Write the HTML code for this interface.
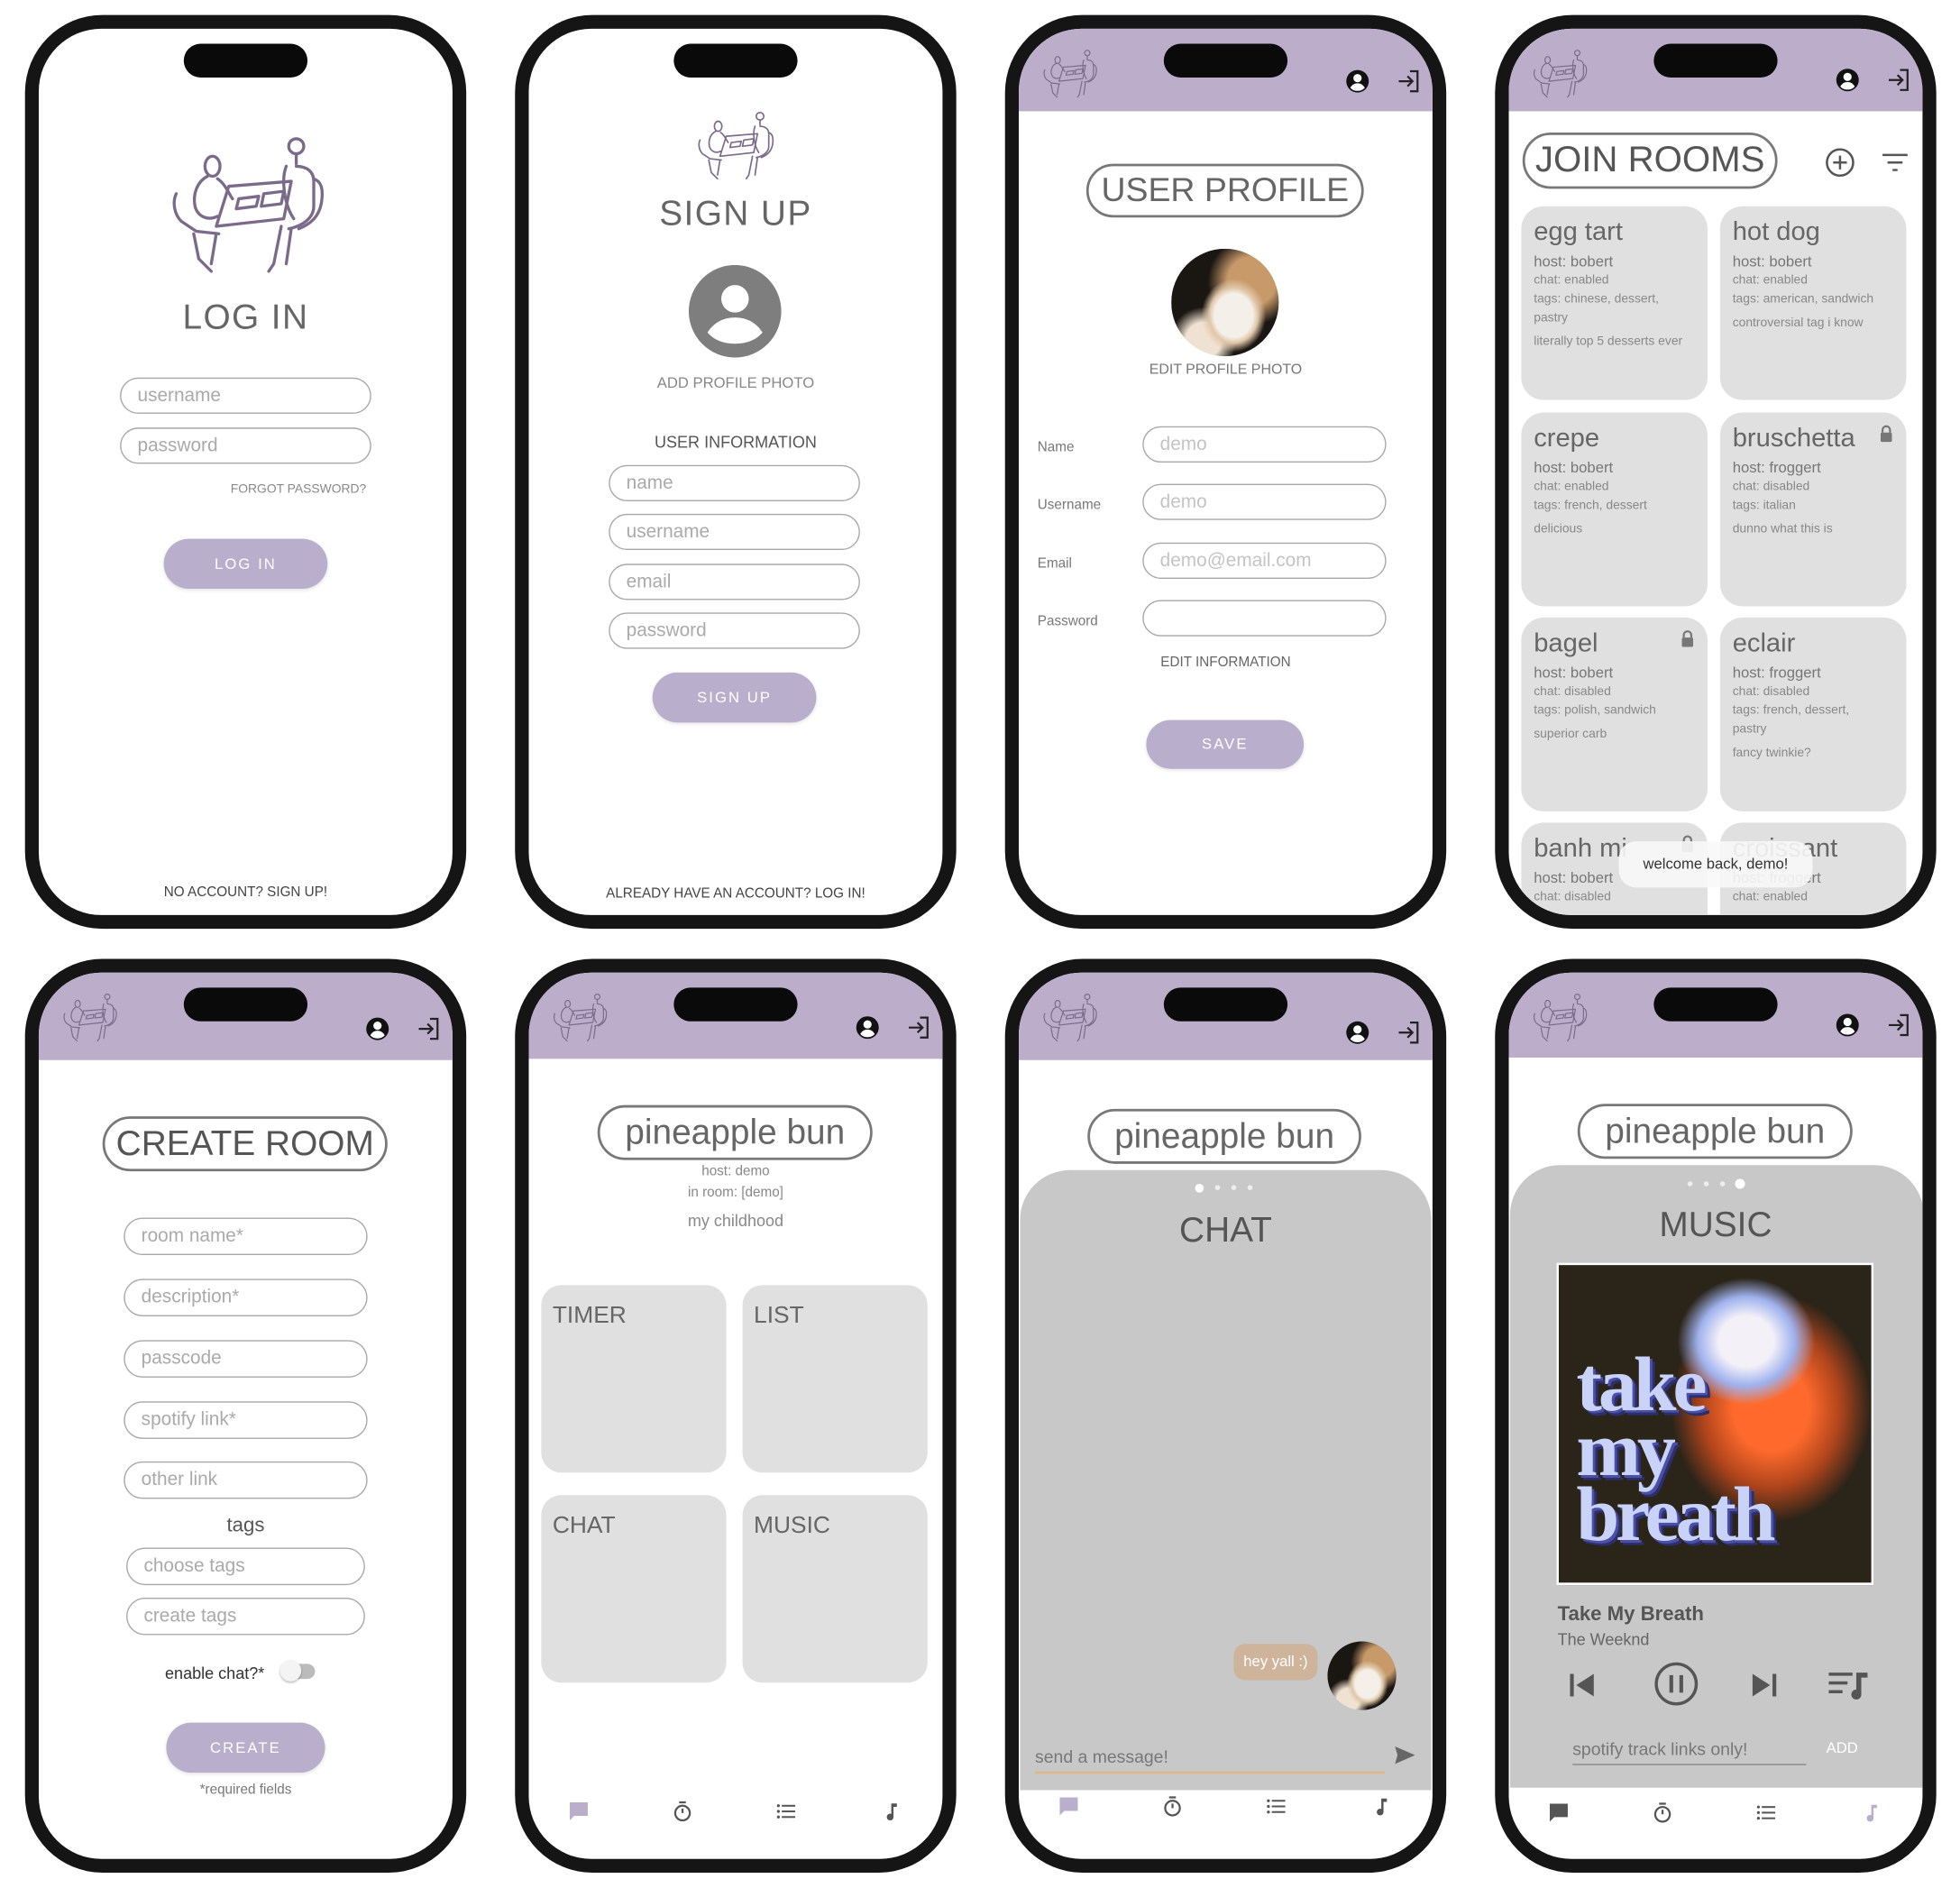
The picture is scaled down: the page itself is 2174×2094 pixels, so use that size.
<!DOCTYPE html>
<html><head><meta charset="utf-8"><style>
*{margin:0;padding:0}
body{width:2174px;height:2092px;background:#fff;overflow:hidden;font-family:"Liberation Sans",sans-serif}
#w{position:absolute;left:0;top:0;width:1568px;height:1510px;transform:scale(1.3865);transform-origin:0 0}
.ph{position:absolute;width:353px;height:731px;background:#151515;border-radius:62px}
.scr{position:absolute;left:11px;top:11px;width:331px;height:709px;border-radius:50px;overflow:hidden;background:#fff}
.c{position:absolute;left:-11px;top:-11px;width:353px;height:731px}
.isl{position:absolute;left:127px;top:23px;width:99px;height:27px;border-radius:14px;background:#0a0a0a}
.a{position:absolute}
.ct{position:absolute;left:0;width:353px;text-align:center}
.hdr{position:absolute;left:0;top:0;width:353px;height:77px;background:#bcaecb}
.pill{position:absolute;border:2px solid #787878;border-radius:999px;text-align:center;color:#666;box-sizing:border-box}
.in{position:absolute;border:1.3px solid #a8a8a8;border-radius:15px;box-sizing:border-box;height:29px;color:#aaa;font-size:15px;padding-left:13px;line-height:27px}
.btn{position:absolute;background:#b9aecb;border-radius:20px;color:#fff;text-align:center;font-size:12px;letter-spacing:1.5px;box-shadow:0 1px 3px rgba(0,0,0,.12)}
.card{position:absolute;width:149px;height:155px;background:#e0e0e0;border-radius:18px;color:#888;font-size:10px;box-sizing:border-box;padding:8px 0 0 10px;line-height:15px}
.card b{display:block;font-weight:normal;font-size:21px;color:#666;line-height:26px;margin-bottom:2px}
.card i{display:block;font-style:normal;font-size:12px;color:#777;line-height:16px}
.card p{margin-top:4px}
.tile{position:absolute;width:148px;height:150px;background:#e0e0e0;border-radius:16px;color:#666;font-size:19px;box-sizing:border-box;padding:14px 0 0 9px}
.lk{position:absolute;right:10px;top:10px}
.cat{position:absolute;border-radius:50%;background:radial-gradient(ellipse 30% 34% at 58% 62%,#f4efe9 0 60%,#e0c7a8 75%,transparent 100%),radial-gradient(circle at 75% 30%,#c89a6a 0 22%,transparent 40%),radial-gradient(circle at 30% 85%,#efe2d2 0 15%,transparent 28%),#1a1612}
</style></head><body><div id="w">
<svg width="0" height="0" style="position:absolute">
<defs>
<symbol id="logo" viewBox="0 0 130 118"><g fill="none" stroke="#7b6a8a" stroke-width="2.4" stroke-linecap="round" stroke-linejoin="round">
<ellipse cx="37" cy="28" rx="6" ry="8"/><path d="M33 36c-8 4-12 14-10 24 2 8 10 12 18 8"/><path d="M41 38c6 4 8 10 12 16"/>
<path d="M8 50c-3 6-2 16 4 22l12 8 18 2"/><path d="M22 82l4 20 10 10M40 82l-4 24"/>
<path d="M50 44l50-4-6 30-54 6z"/><path d="M58 54l16-2-2 8-16 2zM78 50l16-2-2 10-16 2z"/>
<circle cx="104" cy="12" r="6"/><path d="M104 18v8M96 28c-4 10-2 30 6 42M104 28c8 0 14 4 14 12v20c0 10-10 16-20 18"/>
<path d="M118 38c6 2 8 8 6 20-2 10-8 16-18 20"/><path d="M92 76l-6 30-4 6M100 78l-4 28"/>
</g></symbol>
<symbol id="prof" viewBox="0 0 20 20"><circle cx="10" cy="10" r="9" fill="#111"/><circle cx="10" cy="7.5" r="3.3" fill="#fff"/><path d="M4.2 15.2c1.5-2.6 3.4-3.6 5.8-3.6s4.3 1 5.8 3.6c-1.5 1.6-3.5 2.5-5.8 2.5s-4.3-.9-5.8-2.5z" fill="#fff"/></symbol>
<symbol id="out" viewBox="0 0 20 20"><g fill="none" stroke="#222" stroke-width="1.6"><path d="M11 2h6v16h-6"/><path d="M2 10h11M9 6l4 4-4 4"/></g></symbol>
<symbol id="nchat" viewBox="0 0 20 20"><path d="M2 2h16v12H6l-4 4z"/></symbol>
<symbol id="ntimer" viewBox="0 0 20 20"><g fill="none" stroke="#555" stroke-width="1.8"><circle cx="10" cy="11.5" r="6.5"/><path d="M7 2h6M10 11.5V7.5"/></g></symbol>
<symbol id="nlist" viewBox="0 0 20 20"><g fill="#555"><circle cx="3" cy="5" r="1.3"/><circle cx="3" cy="10" r="1.3"/><circle cx="3" cy="15" r="1.3"/><rect x="6" y="4.2" width="12" height="1.6"/><rect x="6" y="9.2" width="12" height="1.6"/><rect x="6" y="14.2" width="12" height="1.6"/></g></symbol>
<symbol id="nnote" viewBox="0 0 20 20"><path d="M10 3h5v3h-3v9a3 3 0 1 1-2-2.8z"/></symbol>
<symbol id="lock" viewBox="0 0 12 14"><path d="M3 6V4a3 3 0 0 1 6 0v2" fill="none" stroke="#777" stroke-width="1.6"/><rect x="1.5" y="6" width="9" height="7.5" rx="1" fill="#777"/></symbol>
</defs></svg>

<!-- PHONE 1 LOGIN -->
<div class="ph" style="left:20px;top:12px"><div class="scr"><div class="c">
<svg class="a" style="left:113px;top:93px" width="130" height="118"><use href="#logo"/></svg>
<div class="ct" style="top:226px;font-size:28px;color:#666;letter-spacing:1px">LOG IN</div>
<div class="in" style="left:76px;top:290px;width:201px">username</div>
<div class="in" style="left:76px;top:330px;width:201px">password</div>
<div class="a" style="left:120px;width:153px;top:374px;text-align:right;font-size:10px;color:#888">FORGOT PASSWORD?</div>
<div class="btn" style="left:111px;top:419px;width:131px;height:40px;line-height:40px">LOG IN</div>
<div class="ct" style="top:696px;font-size:11px;color:#444">NO ACCOUNT? SIGN UP!</div>
</div></div><div class="isl"></div></div>

<!-- PHONE 2 SIGNUP -->
<div class="ph" style="left:412px;top:12px"><div class="scr"><div class="c">
<svg class="a" style="left:144px;top:75px" width="65" height="59"><use href="#logo"/></svg>
<div class="ct" style="top:143px;font-size:28px;color:#666;letter-spacing:1px">SIGN UP</div>
<svg class="a" style="left:139px;top:200px" width="74" height="74" viewBox="0 0 74 74"><circle cx="37" cy="37" r="37" fill="#7e7e7e"/><circle cx="37" cy="27" r="11" fill="#fff"/><path d="M15 54c5-8 13-12 22-12s17 4 22 12c-5 6-13 9-22 9s-17-3-22-9z" fill="#fff"/></svg>
<div class="ct" style="top:287px;font-size:12px;color:#888">ADD PROFILE PHOTO</div>
<div class="ct" style="top:334px;font-size:13px;color:#555">USER INFORMATION</div>
<div class="in" style="left:75px;top:360px;width:201px">name</div>
<div class="in" style="left:75px;top:399px;width:201px">username</div>
<div class="in" style="left:75px;top:439px;width:201px">email</div>
<div class="in" style="left:75px;top:478px;width:201px">password</div>
<div class="btn" style="left:110px;top:526px;width:131px;height:40px;line-height:40px">SIGN UP</div>
<div class="ct" style="top:697px;font-size:11px;color:#444">ALREADY HAVE AN ACCOUNT? LOG IN!</div>
</div></div><div class="isl"></div></div>

<!-- PHONE 3 PROFILE -->
<div class="ph" style="left:804px;top:12px"><div class="scr"><div class="c">
<div class="hdr"></div>
<svg class="a" style="left:29px;top:26px" width="46" height="42"><use href="#logo"/></svg>
<svg class="a" style="left:272px;top:43px" width="20" height="20"><use href="#prof"/></svg>
<svg class="a" style="left:313px;top:43px" width="20" height="20"><use href="#out"/></svg>
<div class="pill" style="left:65px;top:119px;width:222px;height:43px;font-size:27px;line-height:39px">USER PROFILE</div>
<div class="cat" style="left:133px;top:187px;width:86px;height:86px"></div>
<div class="ct" style="top:278px;font-size:11.5px;color:#777">EDIT PROFILE PHOTO</div>
<div class="a" style="left:26px;top:340px;font-size:11px;color:#777">Name</div>
<div class="a" style="left:26px;top:386px;font-size:11px;color:#777">Username</div>
<div class="a" style="left:26px;top:433px;font-size:11px;color:#777">Email</div>
<div class="a" style="left:26px;top:479px;font-size:11px;color:#777">Password</div>
<div class="in" style="left:110px;top:329px;width:195px;color:#c4c4c4">demo</div>
<div class="in" style="left:110px;top:375px;width:195px;color:#c4c4c4">demo</div>
<div class="in" style="left:110px;top:422px;width:195px;color:#c4c4c4">demo@email.com</div>
<div class="in" style="left:110px;top:468px;width:195px"></div>
<div class="ct" style="top:512px;font-size:11px;color:#666">EDIT INFORMATION</div>
<div class="btn" style="left:113px;top:564px;width:126px;height:39px;line-height:39px">SAVE</div>
</div></div><div class="isl"></div></div>

<!-- PHONE 4 JOIN ROOMS -->
<div class="ph" style="left:1196px;top:12px"><div class="scr"><div class="c">
<div class="hdr"></div>
<svg class="a" style="left:29px;top:26px" width="46" height="42"><use href="#logo"/></svg>
<svg class="a" style="left:272px;top:42px" width="20" height="20"><use href="#prof"/></svg>
<svg class="a" style="left:313px;top:42px" width="20" height="20"><use href="#out"/></svg>
<div class="pill" style="left:22px;top:94px;width:204px;height:45px;font-size:29px;line-height:41px;color:#555">JOIN ROOMS</div>
<svg class="a" style="left:264px;top:106px" width="24" height="24" viewBox="0 0 24 24"><g fill="none" stroke="#555" stroke-width="1.8"><circle cx="12" cy="12" r="10.5"/><path d="M12 6.5v11M6.5 12h11"/></g></svg>
<svg class="a" style="left:309px;top:109px" width="22" height="18" viewBox="0 0 22 18"><g stroke="#555" stroke-width="1.8"><path d="M1 3h20M5 9h12M9 15h4"/></g></svg>
<div class="card" style="left:21px;top:153px"><b>egg tart</b><i>host: bobert</i>chat: enabled<br>tags: chinese, dessert,<br>pastry<p>literally top 5 desserts ever</p></div>
<div class="card" style="left:180px;top:153px"><b>hot dog</b><i>host: bobert</i>chat: enabled<br>tags: american, sandwich<p>controversial tag i know</p></div>
<div class="card" style="left:21px;top:318px"><b>crepe</b><i>host: bobert</i>chat: enabled<br>tags: french, dessert<p>delicious</p></div>
<div class="card" style="left:180px;top:318px"><b>bruschetta</b><i>host: froggert</i>chat: disabled<br>tags: italian<p>dunno what this is</p><svg class="lk" width="12" height="14"><use href="#lock"/></svg></div>
<div class="card" style="left:21px;top:482px"><b>bagel</b><i>host: bobert</i>chat: disabled<br>tags: polish, sandwich<p>superior carb</p><svg class="lk" width="12" height="14"><use href="#lock"/></svg></div>
<div class="card" style="left:180px;top:482px"><b>eclair</b><i>host: froggert</i>chat: disabled<br>tags: french, dessert,<br>pastry<p>fancy twinkie?</p></div>
<div class="card" style="left:21px;top:646px"><b>banh mi</b><i>host: bobert</i>chat: disabled<svg class="lk" width="12" height="14"><use href="#lock"/></svg></div>
<div class="card" style="left:180px;top:646px"><b>croissant</b><i>host: froggert</i>chat: enabled</div>
<div class="a" style="left:99px;top:661px;width:155px;height:37px;background:rgba(248,248,248,.9);border-radius:14px;text-align:center;line-height:37px;font-size:12px;color:#333">welcome back, demo!</div>
</div></div><div class="isl"></div></div>

<!-- PHONE 5 CREATE ROOM -->
<div class="ph" style="left:20px;top:767px"><div class="scr"><div class="c">
<div class="hdr" style="height:81px"></div>
<svg class="a" style="left:29px;top:26px" width="46" height="42"><use href="#logo"/></svg>
<svg class="a" style="left:272px;top:46px" width="20" height="20"><use href="#prof"/></svg>
<svg class="a" style="left:313px;top:46px" width="20" height="20"><use href="#out"/></svg>
<div class="pill" style="left:62px;top:126px;width:228px;height:44px;font-size:28px;line-height:40px;color:#555">CREATE ROOM</div>
<div class="in" style="left:79px;top:207px;width:195px;height:30px">room name*</div>
<div class="in" style="left:79px;top:256px;width:195px;height:30px">description*</div>
<div class="in" style="left:79px;top:305px;width:195px;height:30px">passcode</div>
<div class="in" style="left:79px;top:354px;width:195px;height:30px">spotify link*</div>
<div class="in" style="left:79px;top:402px;width:195px;height:30px">other link</div>
<div class="ct" style="top:445px;font-size:16px;color:#555">tags</div>
<div class="in" style="left:81px;top:471px;width:191px;height:30px">choose tags</div>
<div class="in" style="left:81px;top:511px;width:191px;height:30px">create tags</div>
<div class="a" style="left:112px;top:564px;font-size:13px;color:#333">enable chat?*</div>
<div class="a" style="left:208px;top:564px;width:24px;height:12px;border-radius:6px;background:#bbb"></div>
<div class="a" style="left:204px;top:561px;width:17px;height:17px;border-radius:50%;background:#f4f4f4;box-shadow:0 1px 2px rgba(0,0,0,.3)"></div>
<div class="btn" style="left:113px;top:611px;width:127px;height:40px;line-height:40px">CREATE</div>
<div class="ct" style="top:659px;font-size:11px;color:#777">*required fields</div>
</div></div><div class="isl"></div></div>

<!-- PHONE 6 ROOM -->
<div class="ph" style="left:412px;top:767px"><div class="scr"><div class="c">
<div class="hdr" style="height:80px"></div>
<svg class="a" style="left:29px;top:26px" width="46" height="42"><use href="#logo"/></svg>
<svg class="a" style="left:272px;top:45px" width="20" height="20"><use href="#prof"/></svg>
<svg class="a" style="left:313px;top:45px" width="20" height="20"><use href="#out"/></svg>
<div class="pill" style="left:66px;top:117px;width:220px;height:44px;font-size:28px;line-height:40px">pineapple bun</div>
<div class="ct" style="top:164px;font-size:11px;color:#888">host: demo</div>
<div class="ct" style="top:181px;font-size:11px;color:#888">in room: [demo]</div>
<div class="ct" style="top:202px;font-size:13px;color:#888">my childhood</div>
<div class="tile" style="left:21px;top:261px">TIMER</div>
<div class="tile" style="left:182px;top:261px">LIST</div>
<div class="tile" style="left:21px;top:429px">CHAT</div>
<div class="tile" style="left:182px;top:429px">MUSIC</div>
<svg class="a" style="left:42px;top:673px" width="18" height="18" fill="#b9aecb"><use href="#nchat"/></svg>
<svg class="a" style="left:125px;top:673px" width="18" height="18"><use href="#ntimer"/></svg>
<svg class="a" style="left:208px;top:673px" width="18" height="18"><use href="#nlist"/></svg>
<svg class="a" style="left:292px;top:673px" width="18" height="18" fill="#555"><use href="#nnote"/></svg>
</div></div><div class="isl"></div></div>

<!-- PHONE 7 CHAT -->
<div class="ph" style="left:804px;top:767px"><div class="scr"><div class="c">
<div class="hdr" style="height:81px"></div>
<svg class="a" style="left:29px;top:26px" width="46" height="42"><use href="#logo"/></svg>
<svg class="a" style="left:272px;top:49px" width="20" height="20"><use href="#prof"/></svg>
<svg class="a" style="left:313px;top:49px" width="20" height="20"><use href="#out"/></svg>
<div class="pill" style="left:66px;top:120px;width:219px;height:44px;font-size:28px;line-height:40px">pineapple bun</div>
<div class="a" style="left:12px;top:169px;width:329px;height:496px;background:#c8c8c8;border-radius:40px 40px 0 0"></div>
<div class="a" style="left:152px;top:180px;width:7px;height:7px;border-radius:50%;background:#fff"></div>
<div class="a" style="left:168px;top:181px;width:4px;height:4px;border-radius:50%;background:#eee"></div>
<div class="a" style="left:181px;top:181px;width:4px;height:4px;border-radius:50%;background:#eee"></div>
<div class="a" style="left:194px;top:181px;width:4px;height:4px;border-radius:50%;background:#eee"></div>
<div class="ct" style="top:201px;font-size:28px;color:#555">CHAT</div>
<div class="a" style="left:183px;top:548px;width:67px;height:29px;background:#cdb49a;border-radius:9px;color:#fff;font-size:12px;text-align:center;line-height:29px">hey yall :)</div>
<div class="cat" style="left:258px;top:546px;width:55px;height:55px"></div>
<div class="a" style="left:24px;top:630px;font-size:14px;color:#777">send a message!</div>
<div class="a" style="left:24px;top:650px;width:280px;height:1.5px;background:#d9b98e"></div>
<svg class="a" style="left:311px;top:629px" width="18" height="16" viewBox="0 0 18 16"><path d="M1 1l16 7-16 7 2-7z" fill="#666"/></svg>
<svg class="a" style="left:42px;top:669px" width="18" height="18" fill="#b9aecb"><use href="#nchat"/></svg>
<svg class="a" style="left:125px;top:669px" width="18" height="18"><use href="#ntimer"/></svg>
<svg class="a" style="left:208px;top:669px" width="18" height="18"><use href="#nlist"/></svg>
<svg class="a" style="left:292px;top:669px" width="18" height="18" fill="#555"><use href="#nnote"/></svg>
</div></div><div class="isl"></div></div>

<!-- PHONE 8 MUSIC -->
<div class="ph" style="left:1196px;top:767px"><div class="scr"><div class="c">
<div class="hdr" style="height:79px"></div>
<svg class="a" style="left:29px;top:26px" width="46" height="42"><use href="#logo"/></svg>
<svg class="a" style="left:272px;top:43px" width="20" height="20"><use href="#prof"/></svg>
<svg class="a" style="left:313px;top:43px" width="20" height="20"><use href="#out"/></svg>
<div class="pill" style="left:66px;top:116px;width:220px;height:44px;font-size:28px;line-height:40px">pineapple bun</div>
<div class="a" style="left:12px;top:165px;width:331px;height:498px;background:#c8c8c8;border-radius:40px 40px 0 0"></div>
<div class="a" style="left:154px;top:178px;width:4px;height:4px;border-radius:50%;background:#eee"></div>
<div class="a" style="left:167px;top:178px;width:4px;height:4px;border-radius:50%;background:#eee"></div>
<div class="a" style="left:180px;top:178px;width:4px;height:4px;border-radius:50%;background:#eee"></div>
<div class="a" style="left:192px;top:176px;width:8px;height:8px;border-radius:50%;background:#fff"></div>
<div class="ct" style="top:197px;font-size:28px;color:#555">MUSIC</div>
<div class="a" style="left:49px;top:243px;width:254px;height:258px;box-sizing:border-box;border:2px solid #fff;background:radial-gradient(ellipse 22% 20% at 60% 24%,#f4f0f8 0 40%,#9fb2ee 70%,transparent 100%),radial-gradient(ellipse 40% 45% at 68% 45%,#ff6a2c 0 30%,#b0451c 55%,transparent 80%),#2b2419;overflow:hidden">
<div style="position:absolute;left:14px;top:70px;font-family:'Liberation Serif',serif;font-weight:bold;font-size:62px;line-height:52px;color:#c9d3f8;letter-spacing:-3px;text-shadow:2px 2px 0 #4b4fa8,4px 4px 0 #2c2f6a">take<br>my<br>breath</div></div>
<div class="a" style="left:50px;top:516px;font-size:16px;font-weight:bold;color:#555">Take My Breath</div>
<div class="a" style="left:50px;top:537px;font-size:13px;color:#666">The Weeknd</div>
<svg class="a" style="left:58px;top:570px" width="24" height="22" viewBox="0 0 24 22"><rect x="2" y="2" width="3" height="18" fill="#555"/><path d="M21 2v18L7 11z" fill="#555"/></svg>
<svg class="a" style="left:127px;top:562px" width="36" height="36" viewBox="0 0 36 36"><circle cx="18" cy="18" r="16" fill="none" stroke="#555" stroke-width="2.5"/><rect x="12.5" y="11" width="3" height="14" fill="#555"/><rect x="20.5" y="11" width="3" height="14" fill="#555"/></svg>
<svg class="a" style="left:203px;top:570px" width="24" height="22" viewBox="0 0 24 22"><path d="M3 2v18l14-9z" fill="#555"/><rect x="19" y="2" width="3" height="18" fill="#555"/></svg>
<svg class="a" style="left:266px;top:568px" width="34" height="26" viewBox="0 0 34 26"><g fill="#555"><rect x="1" y="3" width="19" height="2.5"/><rect x="1" y="10" width="15" height="2.5"/><rect x="1" y="17" width="11" height="2.5"/><path d="M23 3h9v4h-5v13a4 4 0 1 1-4-3.5z"/></g></svg>
<div class="a" style="left:62px;top:624px;font-size:14px;color:#777">spotify track links only!</div>
<div class="a" style="left:62px;top:644px;width:187px;height:1px;background:#888"></div>
<div class="a" style="left:265px;top:624px;font-size:12px;color:#fff">ADD</div>
<svg class="a" style="left:42px;top:674px" width="18" height="18" fill="#555"><use href="#nchat"/></svg>
<svg class="a" style="left:125px;top:674px" width="18" height="18"><use href="#ntimer"/></svg>
<svg class="a" style="left:208px;top:674px" width="18" height="18"><use href="#nlist"/></svg>
<svg class="a" style="left:292px;top:674px" width="18" height="18" fill="#b9aecb"><use href="#nnote"/></svg>
</div></div><div class="isl"></div></div>

</div></body></html>
